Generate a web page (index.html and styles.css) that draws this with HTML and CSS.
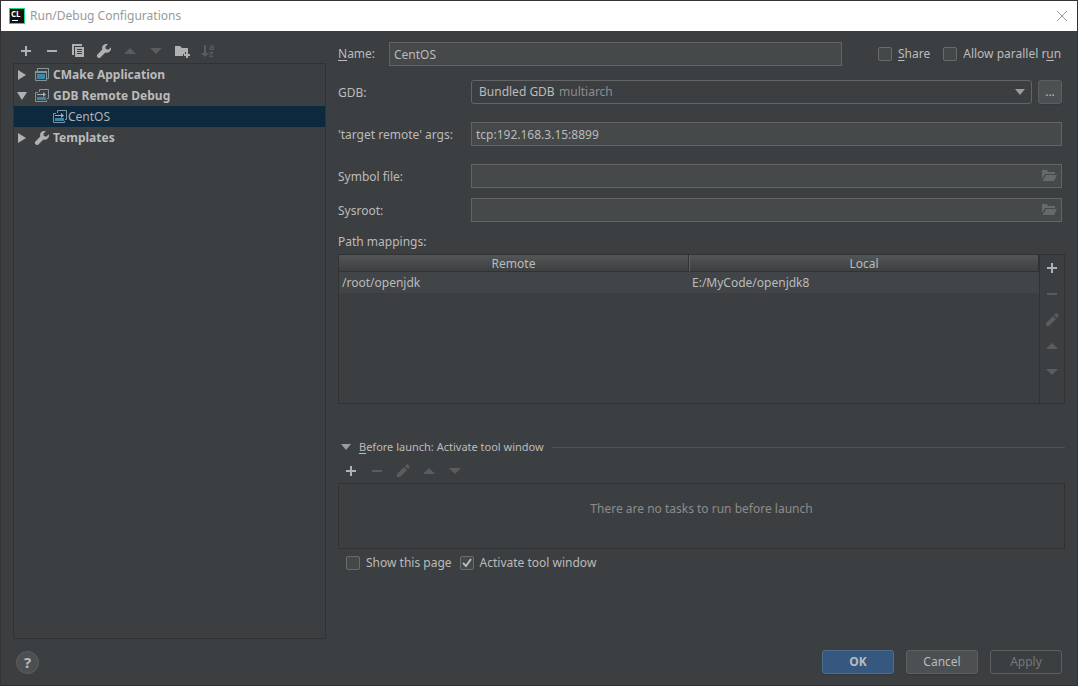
FILE: index.html
```html
<!DOCTYPE html>
<html lang="en">
<head>
  <meta charset="UTF-8" />
  <meta name="viewport" content="width=device-width, initial-scale=1" />
  <title>Run/Debug Configurations</title>
  <link rel="stylesheet" href="styles.css">
</head>
<body>
  <!-- Shared icons -->
  <svg class="sprite" aria-hidden="true">
    <symbol id="add" viewBox="0 0 16 16"><path d="M7 3h2v4h4v2H9v4H7V9H3V7h4z"/></symbol>
    <symbol id="remove" viewBox="0 0 16 16"><path d="M3 7h10v2H3z"/></symbol>
    <symbol id="copy" viewBox="0 0 16 16"><path d="M2 1h10v2H4v9H2z"/><path fill-rule="evenodd" d="M5 4h9v10H5zM7 6h5v1H7zM7 8h5v1H7zM7 10h5v1H7z"/></symbol>
    <symbol id="wrench" viewBox="0 0 16 16"><path d="M14.8 4.200 12.300 6.700 9.900 6.100 9.300 3.700 11.800 1.200C10 .6 8 1.100 6.900 2.600 6 3.800 5.900 5.200 6.300 6.500L1.400 11.400C.7 12.200.7 13.500 1.500 14.300 2.300 15.100 3.600 15.100 4.400 14.400L9.400 9.500C10.700 9.900 12.300 9.700 13.400 8.800 14.900 7.600 15.300 5.800 14.800 4.200z"/></symbol>
    <symbol id="up" viewBox="0 0 16 16"><path d="M8 5l6 6H2z"/></symbol>
    <symbol id="down" viewBox="0 0 16 16"><path d="M2 5h12l-6 6z"/></symbol>
    <symbol id="pencil" viewBox="0 0 16 16"><path d="M2 11 9 4l3 3-7 7H2zM10 3l1.300-1.300q1-.8 2 .1l.9.9q.8 1 0 2L13 6z"/></symbol>
    <symbol id="new-folder" viewBox="0 0 16 16"><path d="M1 3h5l2 2h6v4h-3v2H9v2H1z"/><path d="M12 9h2v2h2v2h-2v2h-2v-2h-2v-2h2z"/></symbol>
    <symbol id="sort" viewBox="0 0 16 16"><path d="M4 2h2v8h3l-4 4-4-4h3z"/><text class="sort-text" x="9" y="7">a</text><text class="sort-text" x="9" y="14">z</text></symbol>
    <symbol id="folder" viewBox="0 0 16 16"><path d="M1 2h5l1 2h7v2H4l-3 5z"/><path d="M5 7h11l-3 6H1.500z"/></symbol>
    <symbol id="app" viewBox="0 0 16 16"><path fill="none" stroke="#87939a" d="M3.500 4V1.500h11v10H13M1.500 4.500h11v9h-11z"/><path fill="#87939a" d="M3 1h12v1H3zM1 4h12v2H1z"/><path fill="#3d86a6" d="M3 7h8v5H3z"/></symbol>
    <symbol id="remote" viewBox="0 0 16 16"><path fill="none" stroke="#87939a" d="M5.500 4V1.500h9v9H13M4 4.500H1.500v9h11V12"/><path fill="#3d86a6" d="M3 9h9v3H3z"/><path fill="#a4afb5" d="M3 6h6V4l3 2.500L9 9V7H3z"/></symbol>
  </svg>

  <div class="dialog">
    <header class="titlebar">
      <svg class="logo" viewBox="0 0 16 16" aria-hidden="true">
        <path fill="#21d789" d="M0 0h16v16H0z"/><path fill="#111" d="M1 1h14v14H1z"/>
        <text class="logo-text" x="2" y="9">CL</text><path fill="#fff" d="M3 12h6v1H3z"/>
      </svg>
      <h1 class="title">Run/Debug Configurations</h1>
      <button class="close" aria-label="Close"><svg viewBox="0 0 12 12"><path fill="none" stroke="currentColor" d="M1 1l10 10M11 1L1 11"/></svg></button>
    </header>

    <main class="content">
      <aside class="sidebar">
        <div class="toolbar">
          <button class="tool" aria-label="Add"><svg><use href="#add"/></svg></button>
          <button class="tool" aria-label="Remove"><svg><use href="#remove"/></svg></button>
          <button class="tool" aria-label="Copy"><svg><use href="#copy"/></svg></button>
          <button class="tool" aria-label="Edit templates"><svg><use href="#wrench"/></svg></button>
          <button class="tool" aria-label="Move up" disabled><svg><use href="#up"/></svg></button>
          <button class="tool" aria-label="Move down" disabled><svg><use href="#down"/></svg></button>
          <button class="tool" aria-label="New folder"><svg><use href="#new-folder"/></svg></button>
          <button class="tool" aria-label="Sort" disabled><svg><use href="#sort"/></svg></button>
        </div>
        <ul class="tree">
          <li class="node"><svg class="arrow" viewBox="0 0 16 16"><path d="M4 3l8 5-8 5z"/></svg><svg><use href="#app"/></svg><span class="group">CMake Application</span></li>
          <li class="node"><svg class="arrow" viewBox="0 0 16 16"><path d="M3 4h10l-5 8z"/></svg><svg><use href="#remote"/></svg><span class="group">GDB Remote Debug</span></li>
          <li class="node child selected"><svg><use href="#remote"/></svg><span>CentOS</span></li>
          <li class="node"><svg class="arrow" viewBox="0 0 16 16"><path d="M4 3l8 5-8 5z"/></svg><svg><use href="#wrench"/></svg><span class="group">Templates</span></li>
        </ul>
      </aside>

      <section class="settings">
        <div class="name-row">
          <label for="name"><u>N</u>ame:</label>
          <input class="field" id="name" type="text" value="CentOS">
          <div class="options">
            <label class="check"><input type="checkbox"><span><u>S</u>hare</span></label>
            <label class="check"><input type="checkbox"><span>Allow parallel r<u>u</u>n</span></label>
          </div>
        </div>

        <div class="form">
          <div class="row">
            <label for="gdb">GDB:</label>
            <div class="combo">
              <select id="gdb"><option>Bundled GDB</option></select>
              <span class="hint">multiarch</span>
              <svg class="combo-arrow" viewBox="0 0 10 6"><path d="M0 0h10L5 6z"/></svg>
            </div>
            <button class="btn more">...</button>
          </div>
          <div class="row">
            <label for="args">'target remote' args:</label>
            <input class="field" id="args" type="text" value="tcp:192.168.3.15:8899">
          </div>
          <div class="row">
            <label for="symbol">Symbol file:</label>
            <div class="field browse"><input id="symbol" type="text"><button aria-label="Browse symbol file"><svg><use href="#folder"/></svg></button></div>
          </div>
          <div class="row">
            <label for="sysroot">Sysroot:</label>
            <div class="field browse"><input id="sysroot" type="text"><button aria-label="Browse sysroot"><svg><use href="#folder"/></svg></button></div>
          </div>
        </div>

        <h2>Path mappings:</h2>
        <div class="mappings">
          <div class="table-area">
            <table>
              <thead><tr><th>Remote</th><th>Local</th></tr></thead>
              <tbody><tr><td>/root/openjdk</td><td>E:/MyCode/openjdk8</td></tr></tbody>
            </table>
          </div>
          <div class="side-tools">
            <button class="tool" aria-label="Add mapping"><svg><use href="#add"/></svg></button>
            <button class="tool" aria-label="Remove mapping" disabled><svg><use href="#remove"/></svg></button>
            <button class="tool" aria-label="Edit mapping" disabled><svg><use href="#pencil"/></svg></button>
            <button class="tool" aria-label="Move mapping up" disabled><svg><use href="#up"/></svg></button>
            <button class="tool" aria-label="Move mapping down" disabled><svg><use href="#down"/></svg></button>
          </div>
        </div>

        <div class="separator">
          <svg class="combo-arrow" viewBox="0 0 10 6"><path d="M0 0h10L5 6z"/></svg>
          <h2><u>B</u>efore launch: Activate tool window</h2>
        </div>
        <div class="toolbar">
          <button class="tool" aria-label="Add task"><svg><use href="#add"/></svg></button>
          <button class="tool" aria-label="Remove task" disabled><svg><use href="#remove"/></svg></button>
          <button class="tool" aria-label="Edit task" disabled><svg><use href="#pencil"/></svg></button>
          <button class="tool" aria-label="Move task up" disabled><svg><use href="#up"/></svg></button>
          <button class="tool" aria-label="Move task down" disabled><svg><use href="#down"/></svg></button>
        </div>
        <div class="tasks">There are no tasks to run before launch</div>
        <div class="launch-options">
          <label class="check"><input type="checkbox"><span>Show this page</span></label>
          <label class="check"><input type="checkbox" checked><span>Activate tool window</span></label>
        </div>
      </section>
    </main>

    <footer class="footer">
      <button class="help" aria-label="Help">?</button>
      <button class="btn primary">OK</button>
      <button class="btn">Cancel</button>
      <button class="btn" disabled>Apply</button>
    </footer>
  </div>
</body>
</html>
```
FILE: styles.css
```css
* {
  box-sizing: border-box;
}

body {
  margin: 0;
  font-family: "Noto Sans", "Open Sans", sans-serif;
  font-size: 12px;
  line-height: 20px;
  color: #bbbbbb;
  background-color: #3c3f41;
}

h1, h2 {
  margin: 0;
  font-size: 12px;
  font-weight: normal;
}

button, input, select {
  font: inherit;
  color: inherit;
}

u {
  text-underline-offset: 2px;
}

svg {
  width: 16px;
  height: 16px;
  flex: none;
  display: block;
  fill: currentColor;
}

.sprite {
  display: none;
}

.dialog {
  display: flex;
  flex-direction: column;
  min-height: 100vh;
  border: 1px solid #343233;
}

.titlebar {
  display: flex;
  align-items: center;
  height: 30px;
  padding: 0 9px 0 8px;
  background-color: #ffffff;
  color: #999999;
}

.logo-text {
  fill: #ffffff;
  font: bold 8px "Open Sans", sans-serif;
}

.sort-text {
  font: bold 9px "Open Sans", sans-serif;
}

.title {
  flex: 1;
  padding-left: 5px;
}

.close {
  padding: 0;
  border: none;
  background: none;
}

.close svg {
  width: 12px;
  height: 12px;
}

.content {
  flex: 1;
  display: flex;
  gap: 12px;
  padding: 0 12px;
}

.sidebar {
  width: 313px;
  flex: none;
  display: flex;
  flex-direction: column;
  padding-top: 7px;
}

.toolbar {
  display: flex;
  height: 25px;
}

.tool {
  display: flex;
  align-items: center;
  justify-content: center;
  width: 26px;
  height: 26px;
  padding: 0;
  border: none;
  background: none;
  color: #afb1b3;
}

.tool:disabled {
  color: #5a5c5e;
}

.tree {
  flex: 1;
  margin: 0;
  padding: 0;
  list-style: none;
  border: 1px solid #323232;
}

.node {
  display: flex;
  align-items: center;
  height: 21px;
  color: #afb1b3;
}

.arrow {
  margin-right: 4px;
}

.group {
  padding-left: 3px;
  font-weight: bold;
  color: #bbbbbb;
}

.child {
  padding-left: 38px;
}

.selected {
  background-color: #0d293e;
}

.settings {
  flex: 1;
  min-width: 0;
  padding-top: 11px;
}

.name-row {
  display: flex;
  align-items: center;
}

.name-row > label {
  width: 51px;
}

.field {
  flex: 1;
  min-width: 0;
  height: 24px;
  padding: 0 4px;
  border: 1px solid #646464;
  background-color: #45494a;
}

.options {
  display: flex;
  gap: 13px;
  width: 223px;
  padding-left: 36px;
}

.check {
  display: flex;
  align-items: center;
  gap: 6px;
  white-space: nowrap;
}

.check input {
  appearance: none;
  width: 14px;
  height: 14px;
  margin: 0;
  border: 1px solid #6b6b6b;
  border-radius: 2px;
  background-color: #43494a;
}

.check input:checked {
  background: #43494a url("data:image/svg+xml,%3Csvg xmlns='http://www.w3.org/2000/svg' viewBox='0 0 12 12'%3E%3Cpath fill='none' stroke='%23bbbbbb' stroke-width='2' d='M2 6l3 3 5-7'/%3E%3C/svg%3E") center / 12px;
}

.form {
  padding: 14px 3px 0 0;
}

.row {
  display: flex;
  align-items: center;
  height: 24px;
  margin-bottom: 18px;
}

.row > label {
  width: 133px;
  padding-top: 2px;
}

.row:nth-child(n+3) {
  margin-bottom: 10px;
}

.combo {
  flex: 1;
  display: flex;
  align-items: center;
  height: 24px;
  padding: 0 6px 0 7px;
  border: 1px solid #646464;
  border-radius: 3px;
}

.combo select {
  appearance: none;
  padding: 0;
  border: none;
  background: none;
}

.hint {
  flex: 1;
  padding-left: 4px;
  color: #8c8c8c;
}

.combo-arrow {
  width: 10px;
  height: 6px;
  color: #9a9da0;
}

.browse {
  display: flex;
  align-items: center;
}

.browse input {
  flex: 1;
  min-width: 0;
  border: none;
  padding: 0;
  background: none;
}

.browse button {
  padding: 0;
  border: none;
  background: none;
  color: #646b6e;
}

.btn {
  width: 72px;
  height: 24px;
  padding: 0;
  border: 1px solid #5e6060;
  border-radius: 3px;
  background-color: #4c5052;
  box-shadow: 0 1px 1px #36393b;
}

.btn:disabled {
  color: #777777;
  background: none;
  box-shadow: none;
}

.primary {
  border-color: #4c708c;
  background-color: #365880;
  font-weight: bold;
}

.more {
  width: 24px;
  margin-left: 6px;
}

.mappings {
  display: flex;
  height: 150px;
  margin-top: 2px;
  border: 1px solid #323232;
}

.table-area {
  flex: 1;
}

table {
  width: 100%;
  table-layout: fixed;
  border-collapse: separate;
  border-spacing: 0;
}

th {
  height: 17px;
  padding: 2px 0 0;
  line-height: 14px;
  font-weight: normal;
  border-right: 1px solid #323232;
  border-bottom: 1px solid #323232;
  background: linear-gradient(#525658, #3d3f40);
}

th + th {
  border-left: 1px solid #5e6162;
}

td {
  height: 21px;
  padding: 0 3px;
  background-color: #414547;
}

.side-tools {
  width: 25px;
  border-left: 1px solid #323232;
}

.side-tools .tool {
  width: 100%;
}

.separator {
  display: flex;
  align-items: center;
  gap: 8px;
  margin-top: 33px;
  padding: 0 0 1px 3px;
}

.separator h2 {
  font-size: 11px;
}

.separator::after {
  content: "";
  flex: 1;
  border-top: 1px solid #515151;
}

.tasks {
  height: 66px;
  padding-top: 15px;
  border: 1px solid #323232;
  text-align: center;
  color: #8c8c8c;
}

.launch-options {
  display: flex;
  gap: 8px;
  padding: 4px 8px;
}

.footer {
  display: flex;
  align-items: center;
  gap: 12px;
  height: 46px;
  padding: 0 15px;
}

.help {
  width: 23px;
  height: 23px;
  margin-right: auto;
  padding: 0;
  border: 1px solid #5e6060;
  border-radius: 50%;
  background-color: #4c5052;
  font-size: 15px;
  font-weight: bold;
}
```
